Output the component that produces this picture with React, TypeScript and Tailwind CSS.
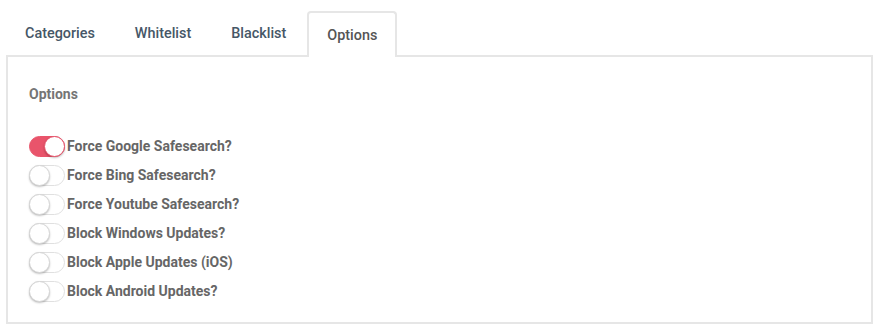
import React, { useState } from 'react';

const tabs = ['Categories', 'Whitelist', 'Blacklist', 'Options'];

const optionList = [
    'Force Google Safesearch?',
    'Force Bing Safesearch?',
    'Force Youtube Safesearch?',
    'Block Windows Updates?',
    'Block Apple Updates (iOS)',
    'Block Android Updates?',
];

const Toggle: React.FC<{ on: boolean; onClick: () => void }> = ({ on, onClick }) => (
    <button
        onClick={onClick}
        className={`relative w-[36px] h-[21px] rounded-full border shrink-0 ${
            on ? 'bg-[#e9546b] border-[#e9546b]' : 'bg-white border-[#e0e0e0]'
        }`}
    >
        <span
            className={`absolute top-[-1px] w-[21px] h-[21px] rounded-full bg-white border shadow-[0_1px_2px_rgba(0,0,0,0.25)] ${
                on ? 'right-[-1px] border-[#e9546b]' : 'left-[-1px] border-[#d6d6d6]'
            }`}
        />
    </button>
);

const App: React.FC = () => {
    const [active, setActive] = useState('Options');
    const [values, setValues] = useState<boolean[]>([true, false, false, false, false, false]);

    const flip = (i: number) => {
        setValues(values.map((v, idx) => (idx === i ? !v : v)));
    };

    return (
        <div className="bg-white w-[879px] h-[336px] px-[6px] pt-[11px] font-['Roboto',sans-serif]">
            {/* Tab bar */}
            <div className="flex h-[44px] items-start">
                {tabs.map((tab) => (
                    <button
                        key={tab}
                        onClick={() => setActive(tab)}
                        className={`px-[17px] text-[14.4px] font-medium border-2 border-b-0 rounded-t-[4px] mr-[2px] ${
                            active === tab
                                ? 'h-[46px] bg-white border-[#e6e6e6] text-[#555] pt-[1px] relative z-10 px-[18px]'
                                : 'h-[44px] border-transparent text-[#465767] pb-[1px]'
                        }`}
                    >
                        {tab}
                    </button>
                ))}
            </div>

            {/* Panel */}
            <div className="border-2 border-[#e6e6e6] w-[867px] h-[269px] pl-[21px] pt-[27px]">
                <h4 className="text-[14px] font-bold text-[#757575] leading-[20px]">Options</h4>
                <div className="mt-[32px] flex flex-col gap-[8px]">
                    {optionList.map((label, i) => (
                        <div key={label} className="flex items-center h-[21px]">
                            <Toggle on={values[i]} onClick={() => flip(i)} />
                            <span className="ml-[2px] text-[14px] font-bold text-[#666] leading-[21px]">
                                {label}
                            </span>
                        </div>
                    ))}
                </div>
            </div>
        </div>
    );
};

export default App;
